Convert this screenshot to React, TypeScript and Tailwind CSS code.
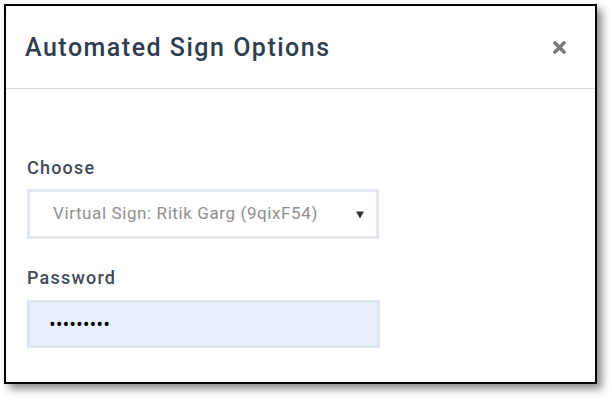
import { FaTimes } from "react-icons/fa";

export default function App() {
  return (
    <div className="w-[612px] h-[400px] bg-white pt-[4px] pl-[4px]" style={{ fontFamily: "Roboto, 'Noto Sans', sans-serif" }}>
      <div className="w-[593px] h-[380px] border-2 border-black bg-white shadow-[5px_5px_8px_rgba(0,0,0,0.45)] flex flex-col">
        {/* Header */}
        <div className="h-[83px] shrink-0 border-b border-[#dcdcdc] flex items-center justify-between pl-[19px] pr-[26px]">
          <h2 className="text-[25px] font-medium tracking-[1.5px] text-[#2e3d4f] leading-none pt-[1px]">Automated Sign Options</h2>
          <FaTimes className="text-[#7a7a7a] w-[19px] h-[19px]" />
        </div>

        {/* Body */}
        <div className="flex flex-col pl-[21px] pt-[68px]">
          <label className="text-[18px] font-medium tracking-[1.2px] text-[#3f4a5a] leading-[22px]">Choose</label>
          <div className="mt-[10px] w-[352px] h-[50px] border-[3px] border-[#e3e8f0] flex items-center justify-between pl-[23px] pr-[12px]">
            <span className="text-[17px] tracking-[0.6px] text-[#8f8f8f]">Virtual Sign: Ritik Garg (9qixF54)</span>
            <svg width="8" height="8" viewBox="0 0 8 8" className="mt-[1px]">
              <path d="M0 0.5 H8 L4 7.5 Z" fill="#333" />
            </svg>
          </div>

          <label className="mt-[28px] text-[18px] font-medium tracking-[1.2px] text-[#3f4a5a] leading-[22px]">Password</label>
          <input
            type="password"
            readOnly
            value="ritikgarg"
            className="mt-[11px] w-[353px] h-[48px] border-[3px] border-[#dfe5ee] bg-[#e8f0fe] pl-[19px] text-[18px] text-black outline-none"
            style={{ fontFamily: "'Open Sans', sans-serif" }}
          />
        </div>
      </div>
    </div>
  );
}
